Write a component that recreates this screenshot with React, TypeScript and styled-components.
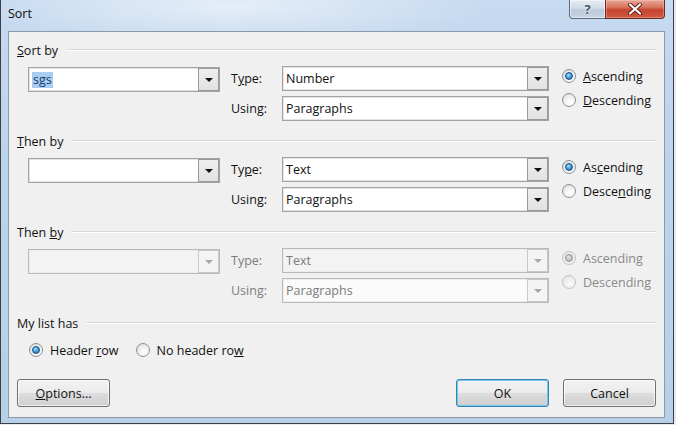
import React from "react";
import styled, { createGlobalStyle } from "styled-components";

const GlobalStyle = createGlobalStyle`
  html, body {
    margin: 0;
    padding: 0;
    background: #e9e9e9;
  }
  body {
    font-family: "Open Sans", "Noto Sans", "DejaVu Sans", sans-serif;
    font-size: 12.5px;
    color: #111111;
  }
`;

const Window = styled.div`
  width: 674px;
  height: 424px;
  box-sizing: border-box;
  display: flex;
  flex-direction: column;
  padding: 0 8px 5px 7px;
  border-left: 1px solid #3c3f44;
  border-right: 1px solid #3c3f44;
  border-bottom: 1px solid #3c3f44;
  background:
    radial-gradient(ellipse 260px 40px at 230px 6px, rgba(255, 255, 255, 0.55), rgba(255, 255, 255, 0) 100%),
    linear-gradient(180deg, #c6daf0 0%, #bcd3ec 40%, #b8cfe8 100%);
`;

const TitleBar = styled.div`
  height: 31px;
  display: flex;
  align-items: flex-start;
  justify-content: space-between;
`;

const Caption = styled.div`
  padding-top: 5px;
  font-size: 12.5px;
  color: #0d0d0d;
`;

const Controls = styled.div`
  display: flex;
`;

const HelpButton = styled.div`
  width: 36px;
  height: 19px;
  box-sizing: border-box;
  border: 1px solid #5d6b7e;
  border-top: none;
  border-right: none;
  border-bottom-left-radius: 4px;
  background: linear-gradient(180deg, #e6ecf3 0%, #d2dce8 45%, #bccadb 55%, #c6d3e3 100%);
  box-shadow: inset 0 0 0 1px rgba(255, 255, 255, 0.5);
  display: flex;
  align-items: center;
  justify-content: center;
  font-weight: 700;
  font-size: 13px;
  color: #3f526b;
  text-shadow: 0 0 2px #ffffff, 0 0 1px #ffffff;
`;

const CloseButton = styled.div`
  width: 60px;
  height: 19px;
  box-sizing: border-box;
  border: 1px solid #6b2a22;
  border-top: none;
  border-bottom-right-radius: 4px;
  background: linear-gradient(180deg, #e7a796 0%, #d8755f 40%, #c54530 55%, #cf5a3f 100%);
  box-shadow: inset 0 0 0 1px rgba(255, 220, 210, 0.35);
  display: flex;
  align-items: center;
  justify-content: center;
`;

const Client = styled.div`
  flex: 1;
  display: flex;
  flex-direction: column;
  background: #f0f0f0;
  border: 1px solid #8c99a9;
  padding: 10px 8px 10px 8px;
`;

const Section = styled.div`
  margin-bottom: 12px;
`;

const Header = styled.div`
  height: 16px;
  display: flex;
  align-items: center;
`;

const HeaderLabel = styled.span`
  white-space: nowrap;
`;

const Rule = styled.div`
  flex: 1;
  margin-left: 8px;
  border-top: 1px solid #d8d8d8;
  border-bottom: 1px solid #ffffff;
`;

const Row = styled.div`
  margin-top: 8px;
  padding-left: 11px;
  display: flex;
  align-items: flex-start;
`;

const ColumnPick = styled.div`
  padding-top: 1px;
`;

const Fields = styled.div`
  margin-left: 11px;
  display: grid;
  grid-template-columns: 51px 267px;
  grid-auto-rows: 25px;
  row-gap: 5px;
  align-items: center;
`;

const FieldLabel = styled.span<{ $off?: boolean }>`
  color: ${(p) => (p.$off ? "#7d7d7d" : "#111111")};
`;

const Combo = styled.div<{ $w?: number; $off?: boolean; $bg?: string }>`
  width: ${(p) => (p.$w ? `${p.$w}px` : "auto")};
  height: 25px;
  box-sizing: border-box;
  display: flex;
  border: 1px solid ${(p) => (p.$off ? "#b9b9b9" : "#a2a2a2")};
  box-shadow: inset 0 0 0 1px ${(p) => (p.$off ? "#ececec" : "#e4e4e4")};
  background: ${(p) => p.$bg ?? (p.$off ? "#f3f3f3" : "#ffffff")};
`;

const ComboText = styled.div<{ $off?: boolean }>`
  flex: 1;
  display: flex;
  align-items: center;
  padding-left: 3px;
  color: ${(p) => (p.$off ? "#7a7a7a" : "#111111")};
  overflow: hidden;
  white-space: nowrap;
`;

const Selected = styled.span`
  background: #a9cdf1;
  color: #123a70;
  padding: 0 1px;
  line-height: 16px;
`;

const DropButton = styled.div<{ $off?: boolean }>`
  width: 21px;
  box-sizing: border-box;
  border: 1px solid ${(p) => (p.$off ? "#c8c8c8" : "#9a9a9a")};
  background: ${(p) =>
    p.$off ? "#f4f4f4" : "linear-gradient(180deg, #eeeeee 0%, #e2e2e2 100%)"};
  display: flex;
  align-items: center;
  justify-content: center;
`;

const Caret = styled.span<{ $off?: boolean }>`
  width: 0;
  height: 0;
  border-left: 4px solid transparent;
  border-right: 4px solid transparent;
  border-top: 4px solid ${(p) => (p.$off ? "#a6a6a6" : "#111111")};
  margin-top: 1px;
`;

const Order = styled.div`
  margin-left: 13px;
  padding-top: 2px;
  display: flex;
  flex-direction: column;
  gap: 8px;
`;

const Choice = styled.label<{ $off?: boolean }>`
  height: 16px;
  display: flex;
  align-items: center;
  gap: 7px;
  color: ${(p) => (p.$off ? "#8a8a8a" : "#111111")};
  white-space: nowrap;
`;

const RadioRing = styled.span<{ $off?: boolean }>`
  width: 14px;
  height: 14px;
  box-sizing: border-box;
  border-radius: 50%;
  flex: none;
  border: 1px solid ${(p) => (p.$off ? "#bfc3c7" : "#8b9096")};
  background: ${(p) =>
    p.$off
      ? "radial-gradient(circle at 60% 65%, #fafafa 0%, #ececec 60%, #dedede 100%)"
      : "radial-gradient(circle at 62% 68%, #ffffff 0%, #f2f2f2 45%, #cfd2d5 100%)"};
  display: flex;
  align-items: center;
  justify-content: center;
`;

const RadioDot = styled.span<{ $off?: boolean }>`
  width: 8px;
  height: 8px;
  box-sizing: border-box;
  border-radius: 50%;
  border: 1px solid ${(p) => (p.$off ? "#8f8f8f" : "#1b4f7e")};
  background: ${(p) =>
    p.$off
      ? "radial-gradient(circle at 40% 35%, #e4e4e4 0%, #a9a9a9 100%)"
      : "radial-gradient(circle at 40% 35%, #a8e2ff 0%, #43a3e0 45%, #1c64a0 100%)"};
`;

const ListRow = styled.div`
  margin-top: 11px;
  padding-left: 12px;
  display: flex;
  gap: 17px;
`;

const Buttons = styled.div`
  margin-top: 21px;
  display: flex;
  align-items: center;
`;

const Spacer = styled.div`
  flex: 1;
`;

const PushButton = styled.button<{ $focus?: boolean; $gap?: number }>`
  width: 93px;
  height: 28px;
  margin-left: ${(p) => p.$gap ?? 0}px;
  box-sizing: border-box;
  font: inherit;
  color: #111111;
  border-radius: 3px;
  border: 1px solid ${(p) => (p.$focus ? "#3c7fb1" : "#707070")};
  background: linear-gradient(180deg, #f2f2f2 0%, #ebebeb 48%, #dddddd 52%, #cfcfcf 100%);
  box-shadow: inset 0 0 0 1px ${(p) => (p.$focus ? "#6fcbef" : "rgba(255, 255, 255, 0.7)")};
  padding: 0;
`;

const Key = styled.u`
  text-decoration: underline;
  text-underline-offset: 1px;
`;

type Mnemonic = { text: string; at?: number };

function Label({ text, at }: Mnemonic) {
  if (at === undefined) return <>{text}</>;
  return (
    <>
      {text.slice(0, at)}
      <Key>{text[at]}</Key>
      {text.slice(at + 1)}
    </>
  );
}

function Radio({ label, checked, off }: { label: Mnemonic; checked?: boolean; off?: boolean }) {
  return (
    <Choice $off={off}>
      <RadioRing $off={off}>{checked && <RadioDot $off={off} />}</RadioRing>
      <span>
        <Label {...label} />
      </span>
    </Choice>
  );
}

function ComboBox({
  width,
  value,
  selected,
  off,
  bg,
}: {
  width?: number;
  value?: string;
  selected?: boolean;
  off?: boolean;
  bg?: string;
}) {
  return (
    <Combo $w={width} $off={off} $bg={bg}>
      <ComboText $off={off}>{selected ? <Selected>{value}</Selected> : value}</ComboText>
      <DropButton $off={off}>
        <Caret $off={off} />
      </DropButton>
    </Combo>
  );
}

type Level = {
  title: Mnemonic;
  column?: string;
  type: string;
  typeKey?: number;
  asc: Mnemonic;
  desc: Mnemonic;
  off?: boolean;
};

const levels: Level[] = [
  {
    title: { text: "Sort by", at: 0 },
    column: "sgs",
    type: "Number",
    typeKey: 1,
    asc: { text: "Ascending", at: 0 },
    desc: { text: "Descending", at: 0 },
  },
  {
    title: { text: "Then by", at: 0 },
    column: "",
    type: "Text",
    typeKey: 2,
    asc: { text: "Ascending", at: 2 },
    desc: { text: "Descending", at: 5 },
  },
  {
    title: { text: "Then by", at: 5 },
    column: "",
    type: "Text",
    asc: { text: "Ascending" },
    desc: { text: "Descending" },
    off: true,
  },
];

function SortLevel({ level, first }: { level: Level; first: boolean }) {
  const off = level.off;
  return (
    <Section>
      <Header>
        <HeaderLabel>
          <Label {...level.title} />
        </HeaderLabel>
        <Rule />
      </Header>
      <Row>
        <ColumnPick>
          <ComboBox width={192} value={level.column} selected={first} off={off} />
        </ColumnPick>
        <Fields>
          <FieldLabel $off={off}>
            <Label text="Type:" at={level.typeKey} />
          </FieldLabel>
          <ComboBox value={level.type} off={off} bg={off ? "#f3f3f3" : undefined} />
          <FieldLabel $off={off}>Using:</FieldLabel>
          <ComboBox value="Paragraphs" off={off} bg={off ? "#fbfbfb" : undefined} />
        </Fields>
        <Order>
          <Radio label={level.asc} checked off={off} />
          <Radio label={level.desc} off={off} />
        </Order>
      </Row>
    </Section>
  );
}

export default function App() {
  return (
    <>
      <GlobalStyle />
      <Window>
        <TitleBar>
          <Caption>Sort</Caption>
          <Controls>
            <HelpButton>?</HelpButton>
            <CloseButton>
              <svg width="16" height="12" viewBox="0 0 16 12">
                <path d="M3 1.5 L13 10.5 M13 1.5 L3 10.5" stroke="#5a1c14" strokeWidth="4" strokeLinecap="round" />
                <path d="M3 1.5 L13 10.5 M13 1.5 L3 10.5" stroke="#ffffff" strokeWidth="2.2" strokeLinecap="round" />
              </svg>
            </CloseButton>
          </Controls>
        </TitleBar>
        <Client>
          {levels.map((lv, i) => (
            <SortLevel key={i} level={lv} first={i === 0} />
          ))}
          <Header>
            <HeaderLabel>My list has</HeaderLabel>
            <Rule />
          </Header>
          <ListRow>
            <Radio label={{ text: "Header row", at: 7 }} checked />
            <Radio label={{ text: "No header row", at: 12 }} />
          </ListRow>
          <Buttons>
            <PushButton>
              <Label text="Options..." at={0} />
            </PushButton>
            <Spacer />
            <PushButton $focus>OK</PushButton>
            <PushButton $gap={14}>Cancel</PushButton>
          </Buttons>
        </Client>
      </Window>
    </>
  );
}
